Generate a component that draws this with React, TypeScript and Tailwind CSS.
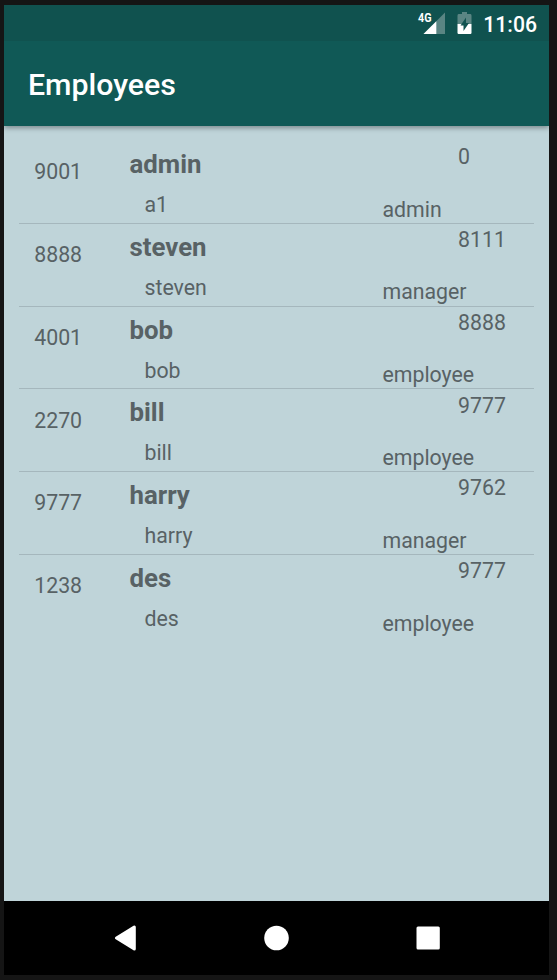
type Employee = { id: string; name: string; user: string; manager: string; role: string };

const employees: Employee[] = [
  { id: "9001", name: "admin", user: "a1", manager: "0", role: "admin" },
  { id: "8888", name: "steven", user: "steven", manager: "8111", role: "manager" },
  { id: "4001", name: "bob", user: "bob", manager: "8888", role: "employee" },
  { id: "2270", name: "bill", user: "bill", manager: "9777", role: "employee" },
  { id: "9777", name: "harry", user: "harry", manager: "9762", role: "manager" },
  { id: "1238", name: "des", user: "des", manager: "9777", role: "employee" },
];

function StatusBar() {
  return (
    <div className="flex h-9 shrink-0 items-start justify-end bg-[#10524f] pr-3">
      <svg className="mt-[5px] mr-[11px]" width="29" height="26" viewBox="0 0 29 26">
        <path d="M28 2.500V24H6.500Z" fill="#5a8583" />
        <path d="M19.300 11.200V24H6.500Z" fill="#fff" />
        <text x="1" y="12" fill="#fff" fontSize="13" fontWeight="700" fontFamily="Roboto" textLength="13.500" lengthAdjust="spacingAndGlyphs">4G</text>
      </svg>
      <svg className="mt-[7px] mr-[11px]" width="15" height="22" viewBox="0 0 15 22">
        <path d="M5 0H10V2H13.500Q14.500 2 14.500 3.500V12H0.500V3.500Q0.500 2 1.500 2H5Z" fill="#5a8583" />
        <path d="M0.500 12H14.500V20.500Q14.500 22 13.500 22H1.500Q0.500 22 0.500 20.500Z" fill="#fff" />
        <path d="M9 5.500V11H12L6.500 19V13.500H3.500Z" fill="#10524f" />
      </svg>
      <span className="mt-[8px] text-[21.200px] leading-6 font-medium text-white">11:06</span>
    </div>
  );
}

function EmployeeRow({ employee, last }: { employee: Employee; last: boolean }) {
  return (
    <li
      className={`flex h-[82.800px] items-start border-b-[1.500px] pl-[15.200px] ${last ? "border-transparent" : "border-[#a5b7bd]"}`}
    >
      <span className="w-[95.300px] pt-[19.200px]">{employee.id}</span>
      <div className="w-[253px] pt-[8px]">
        <div className="text-[25.800px] leading-[30px] font-bold">{employee.name}</div>
        <div className="pt-[14.100px] pl-[15px]">{employee.user}</div>
      </div>
      <div className="pt-[4.200px]">
        <div className="pl-[75.500px]">{employee.manager}</div>
        <div className="pt-[28.500px]">{employee.role}</div>
      </div>
    </li>
  );
}

export default function App() {
  return (
    <div className="h-[980px] w-[557px] overflow-hidden bg-[#151515] pt-[5px] pl-1 font-[Roboto,sans-serif]">
      <div className="flex h-[970px] w-[545px] flex-col bg-[#bfd4d9]">
        <StatusBar />
        <header className="z-10 flex h-[85px] shrink-0 items-center bg-[#105956] pt-[2px] pl-6 shadow-[0_2px_5px_rgba(0,0,0,0.35)] [clip-path:inset(0_0_-10px_0)]">
          <h1 className="text-[30.300px] leading-9 font-medium text-white">Employees</h1>
        </header>
        <ul className="flex-1 px-[15px] pt-[15px] text-[21.300px] leading-6 text-[#586265]">
          {employees.map((employee, i) => (
            <EmployeeRow key={employee.id} employee={employee} last={i === employees.length - 1} />
          ))}
        </ul>
        <nav className="flex h-[74px] shrink-0 items-center justify-center bg-black">
          <svg width="330" height="26" viewBox="0 0 330 26">
            <path d="M22.300 2V24L4.500 13Z" fill="#fff" stroke="#fff" strokeWidth="3" strokeLinejoin="round" />
            <circle cx="164.500" cy="13" r="12.300" fill="#fff" />
            <rect x="304.500" y="1.500" width="23.300" height="23" rx="1.500" fill="#fff" />
          </svg>
        </nav>
      </div>
    </div>
  );
}
